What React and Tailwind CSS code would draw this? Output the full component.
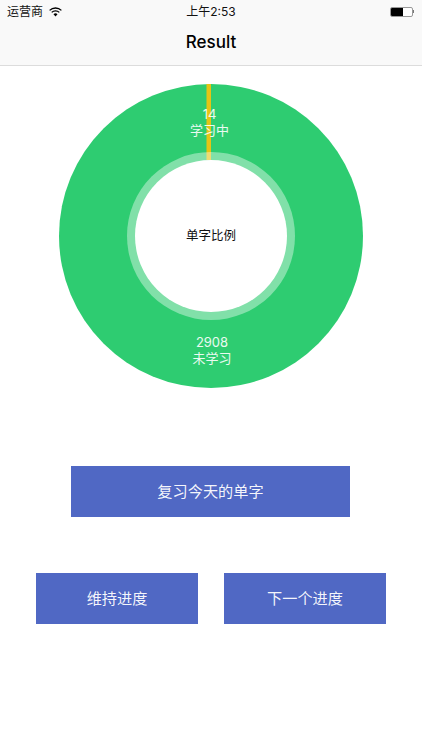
import React from "react";

function Donut() {
  return (
    <div className="relative w-[304px] h-[304px]">
      <svg width="304" height="304" viewBox="0 0 304 304" className="block">
        <circle cx="152" cy="152" r="152" fill="#2ecc71" />
        <rect x="147.5" y="0" width="4.5" height="76" fill="#e5c415" />
        <circle cx="152" cy="152" r="84" fill="#ffffff" fillOpacity="0.4" />
        <circle cx="152" cy="152" r="76" fill="#ffffff" />
      </svg>
      <div className="absolute left-0 right-0 top-[22px] flex flex-col items-center text-white/90 text-[13px] leading-[16px] pr-[3px]">
        <span>14</span>
        <span>学习中</span>
      </div>
      <div className="absolute inset-0 flex items-center justify-center text-[#111] text-[12.5px]">
        单字比例
      </div>
      <div className="absolute left-0 right-0 top-[250px] flex flex-col items-center text-white/90 text-[13px] leading-[16px] pl-[2px]">
        <span>2908</span>
        <span>未学习</span>
      </div>
    </div>
  );
}

export default function App() {
  return (
    <div className="w-[422px] h-[750px] bg-white flex flex-col overflow-hidden font-['Inter','Noto_Sans_CJK_SC',sans-serif]">
      <header className="bg-[#f9f9f9] border-b border-[#dcdcdc] h-[66px] flex flex-col shrink-0">
        <div className="h-[22px] px-[7px] pt-[1px] grid grid-cols-3 items-center text-[12px] text-[#111]">
          <div className="flex items-center gap-[6px]">
            <span>运营商</span>
            <svg width="13" height="10" viewBox="0 0 13 10">
              <path d="M0.6 3.4a8.4 8.4 0 0 1 11.8 0" fill="none" stroke="#000" strokeWidth="1.3" />
              <path d="M2.7 5.4a5.4 5.4 0 0 1 7.6 0" fill="none" stroke="#000" strokeWidth="1.3" />
              <path d="M4.5 7.2L6.5 9.6L8.5 7.2a3 3 0 0 0-4 0z" fill="#000" />
            </svg>
          </div>
          <div className="text-center">上午2:53</div>
          <div className="flex justify-end items-center pr-[1px]">
            <div className="w-[23px] h-[10px] border border-[#999] rounded-[2px] bg-white overflow-hidden">
              <div className="w-[12px] h-full bg-black" />
            </div>
            <div className="w-[1px] h-[3px] bg-[#777]" />
          </div>
        </div>
        <div className="flex-1 flex items-center justify-center text-[17px] font-medium text-black pb-[1px]">
          Result
        </div>
      </header>
      <main className="flex flex-col items-center pt-[18px]">
        <Donut />
        <button className="mt-[78px] mr-[1px] pt-[2px] w-[279px] h-[51px] bg-[#5068c4] text-white/95 text-[15.2px]">
          复习今天的单字
        </button>
        <div className="mt-[56px] flex gap-[26px]">
          <button className="pt-[1px] w-[162px] h-[51px] bg-[#5068c4] text-white/95 text-[15.2px]">维持进度</button>
          <button className="pt-[1px] w-[162px] h-[51px] bg-[#5068c4] text-white/95 text-[15.2px]">下一个进度</button>
        </div>
      </main>
    </div>
  );
}
